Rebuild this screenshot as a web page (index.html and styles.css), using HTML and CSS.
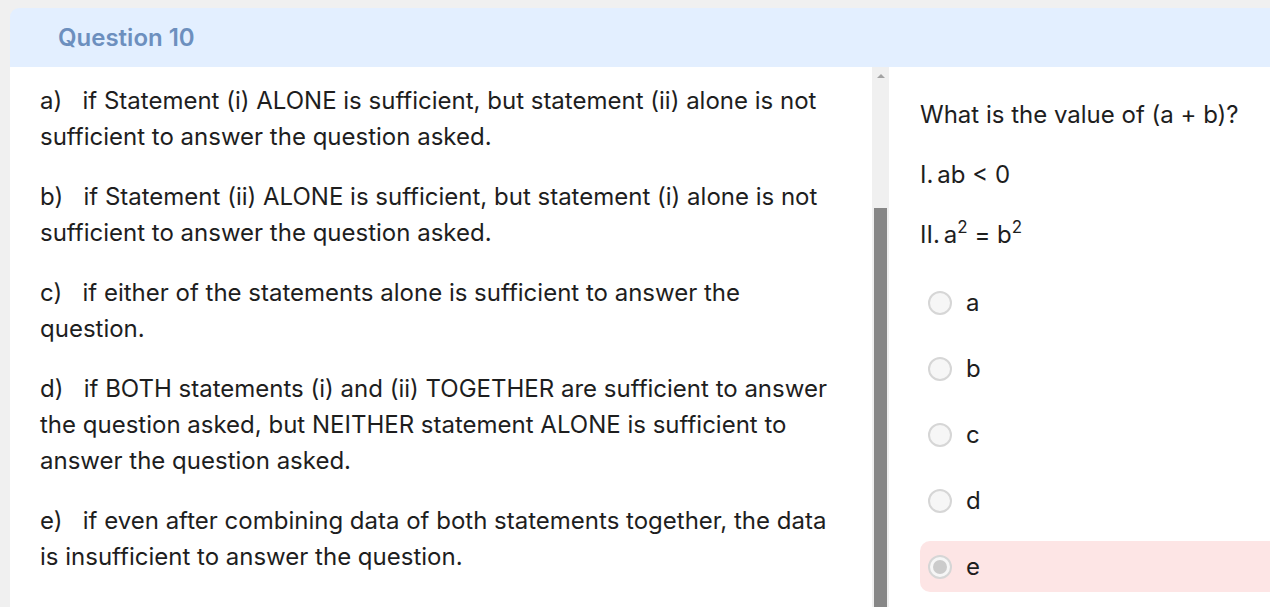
FILE: index.html
```html
<!DOCTYPE html>
<html lang="en">
<head>
    <meta charset="UTF-8">
    <meta name="viewport" content="width=device-width, initial-scale=1.0">
    <title>Question 10</title>
    <link rel="stylesheet" href="styles.css">
</head>
<body>
    <div class="question-card">
        <!-- Header -->
        <div class="question-header">Question 10</div>

        <div class="question-body">
            <!-- Answer choices explanation -->
            <div class="choices-pane">
                <p>a)&nbsp;&nbsp; if Statement (i) ALONE is sufficient, but statement (ii) alone is not sufficient to answer the question asked.</p>
                <p>b)&nbsp;&nbsp; if Statement (ii) ALONE is sufficient, but statement (i) alone is not sufficient to answer the question asked.</p>
                <p>c)&nbsp;&nbsp; if either of the statements alone is sufficient to answer the question.</p>
                <p>d)&nbsp;&nbsp; if BOTH statements (i) and (ii) TOGETHER are sufficient to answer the question asked, but NEITHER statement ALONE is sufficient to answer the question asked.</p>
                <p>e)&nbsp;&nbsp; if even after combining data of both statements together, the data is insufficient to answer the question.</p>
            </div>

            <!-- Scrollbar -->
            <div class="scroll-track">
                <div class="scroll-arrow"></div>
                <div class="scroll-thumb"></div>
            </div>

            <!-- Question and options -->
            <div class="question-pane">
                <p>What is the value of (a + b)?</p>
                <p><span class="roman">I.</span>ab &lt; 0</p>
                <p><span class="roman">II.</span>a<sup>2</sup> = b<sup>2</sup></p>

                <ul class="options">
                    <li class="option"><span class="radio"></span>a</li>
                    <li class="option"><span class="radio"></span>b</li>
                    <li class="option"><span class="radio"></span>c</li>
                    <li class="option"><span class="radio"></span>d</li>
                    <li class="option wrong"><span class="radio checked"></span>e</li>
                </ul>
            </div>
        </div>
    </div>
</body>
</html>
```

FILE: styles.css
```css
/* Page */
html, body {
    height: 100%;
}

body {
    margin: 0;
    padding: 8px 0 0 10px;
    box-sizing: border-box;
    background-color: #f0f0f0;
    font-family: Inter, "Noto Sans", sans-serif;
    color: #1e1e1e;
    overflow: hidden;
}

.question-card {
    display: flex;
    flex-direction: column;
    height: 100%;
    margin-right: -20px;
}

/* Header */
.question-header {
    height: 59px;
    padding-left: 48px;
    display: flex;
    align-items: center;
    background-color: #e3efff;
    border-radius: 9px 9px 0 0;
    color: #6d8fbe;
    font-size: 24px;
    font-weight: 600;
}

.question-body {
    flex: 1;
    display: flex;
    min-height: 0;
}

/* Left pane */
.choices-pane {
    width: 862px;
    padding: 16px 32px 0 30px;
    box-sizing: border-box;
    background-color: #fff;
    font-size: 24px;
    line-height: 36px;
}

.choices-pane p {
    margin: 0 0 24px 0;
}

/* Scrollbar */
.scroll-track {
    width: 17px;
    display: flex;
    flex-direction: column;
    align-items: center;
    background-color: #f0f0f0;
}

.scroll-arrow {
    width: 0;
    height: 0;
    margin-top: 7px;
    border-left: 4px solid transparent;
    border-right: 4px solid transparent;
    border-bottom: 4px solid #a3a3a3;
}

.scroll-thumb {
    width: 13px;
    flex: 1;
    margin-top: 130px;
    background-color: #878787;
}

/* Right pane */
.question-pane {
    flex: 1;
    padding: 30px 0 0 31px;
    background-color: #fff;
    font-size: 24px;
    line-height: 36px;
}

.question-pane p {
    margin: 0 0 24px 0;
}

.roman {
    margin-right: 4px;
}

sup {
    font-size: 17px;
    line-height: 0;
    vertical-align: 10px;
}

/* Options */
.options {
    list-style: none;
    margin: 0;
    padding: 0;
}

.option {
    height: 51px;
    margin-bottom: 15px;
    padding-left: 8px;
    display: flex;
    align-items: center;
    border-radius: 10px;
    font-size: 24px;
}

.option.wrong {
    background-color: #fde5e5;
}

.radio {
    width: 24px;
    height: 24px;
    margin-right: 14px;
    box-sizing: border-box;
    border: 2px solid #d6d6d6;
    border-radius: 50%;
    background-color: #f6f6f6;
    display: flex;
    align-items: center;
    justify-content: center;
}

.radio.checked::after {
    content: "";
    width: 14px;
    height: 14px;
    border-radius: 50%;
    background-color: #cbcbcb;
}
```
